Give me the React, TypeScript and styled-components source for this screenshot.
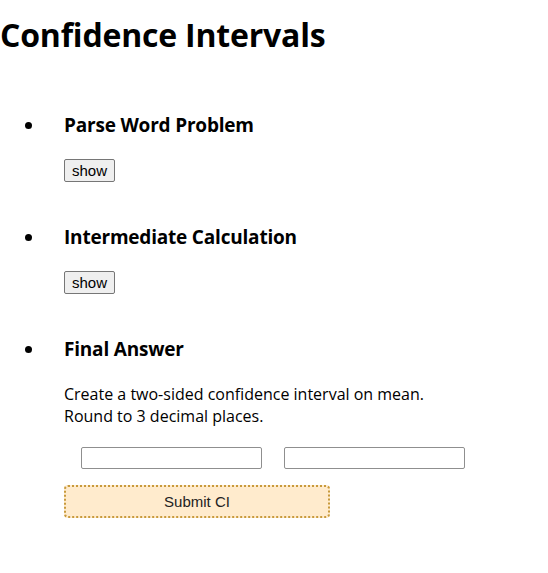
import styled, { createGlobalStyle } from 'styled-components';

const GlobalStyle = createGlobalStyle`
  body {
    margin: 0;
    background: #ffffff;
    color: #000000;
    font-family: "Open Sans", "Noto Sans", sans-serif;
  }
`;

const Page = styled.div`
  padding-top: 14px;
`;

const Title = styled.h1`
  margin: 0 0 55px;
  font-size: 32px;
  font-weight: 700;
  line-height: 42px;
  letter-spacing: -0.2px;
`;

const StepList = styled.ul`
  margin: 0;
  padding-left: 64px;
  list-style: none;
`;

const Step = styled.li`
  position: relative;
  padding-bottom: 41px;

  &::before {
    content: '';
    position: absolute;
    left: -39px;
    top: 11px;
    width: 7px;
    height: 7px;
    border-radius: 50%;
    background: #000;
  }
`;

const StepTitle = styled.h3`
  margin: 0 0 20px;
  font-size: 19px;
  line-height: 28px;
  font-weight: 700;
  letter-spacing: -0.2px;
`;

const ShowButton = styled.button`
  font-family: Arial, "Liberation Sans", sans-serif;
  font-size: 15px;
  padding: 1px 7px;
  height: 23px;
  background: #efefef;
  border: 1px solid #767676;
  border-radius: 2px;
  color: #000;
`;

const Prompt = styled.p`
  margin: 0 0 20px;
  font-size: 16px;
  line-height: 22px;
`;

const Inputs = styled.div`
  display: flex;
  gap: 22px;
  padding-left: 17px;
  margin-bottom: 16px;
`;

const Field = styled.input`
  width: 181px;
  height: 22px;
  box-sizing: border-box;
  border: 1px solid #8f8f8f;
  border-radius: 2px;
  padding: 1px 2px;
`;

const SubmitButton = styled.button`
  width: 266px;
  height: 33px;
  background: #ffebcd;
  border: 2px dotted #c89a3c;
  border-radius: 4px;
  font-family: Arial, "Liberation Sans", sans-serif;
  font-size: 15px;
  color: #222;
`;

const steps = ['Parse Word Problem', 'Intermediate Calculation'];

export default function App() {
  return (
    <Page>
      <GlobalStyle />
      <Title>Confidence Intervals</Title>
      <StepList>
        {steps.map((s) => (
          <Step key={s}>
            <StepTitle>{s}</StepTitle>
            <ShowButton>show</ShowButton>
          </Step>
        ))}
        <Step>
          <StepTitle>Final Answer</StepTitle>
          <Prompt>
            Create a two-sided confidence interval on mean.
            <br />
            Round to 3 decimal places.
          </Prompt>
          <Inputs>
            <Field />
            <Field />
          </Inputs>
          <SubmitButton>Submit CI</SubmitButton>
        </Step>
      </StepList>
    </Page>
  );
}
